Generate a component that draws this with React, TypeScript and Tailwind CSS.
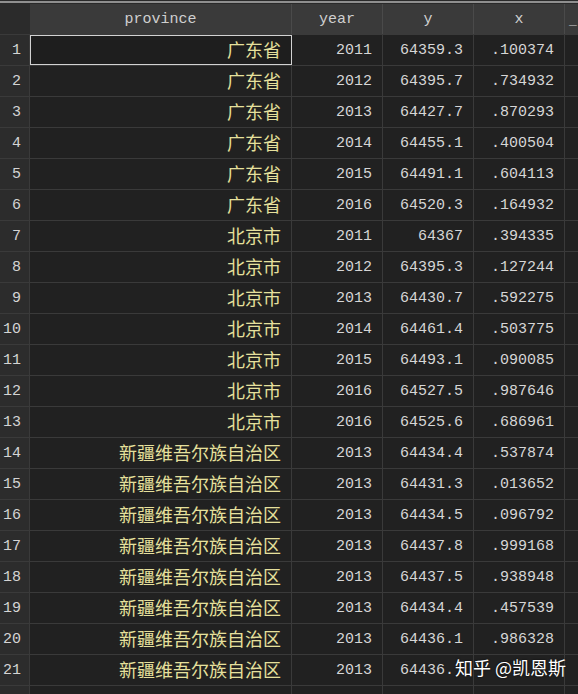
import React from 'react';

type Row = { p: string; year: string; y: string; x: string };

const GD = '广东省';
const BJ = '北京市';
const XJ = '新疆维吾尔族自治区';

const rows: Row[] = [
  { p: GD, year: '2011', y: '64359.3', x: '.100374' },
  { p: GD, year: '2012', y: '64395.7', x: '.734932' },
  { p: GD, year: '2013', y: '64427.7', x: '.870293' },
  { p: GD, year: '2014', y: '64455.1', x: '.400504' },
  { p: GD, year: '2015', y: '64491.1', x: '.604113' },
  { p: GD, year: '2016', y: '64520.3', x: '.164932' },
  { p: BJ, year: '2011', y: '64367', x: '.394335' },
  { p: BJ, year: '2012', y: '64395.3', x: '.127244' },
  { p: BJ, year: '2013', y: '64430.7', x: '.592275' },
  { p: BJ, year: '2014', y: '64461.4', x: '.503775' },
  { p: BJ, year: '2015', y: '64493.1', x: '.090085' },
  { p: BJ, year: '2016', y: '64527.5', x: '.987646' },
  { p: BJ, year: '2016', y: '64525.6', x: '.686961' },
  { p: XJ, year: '2013', y: '64434.4', x: '.537874' },
  { p: XJ, year: '2013', y: '64431.3', x: '.013652' },
  { p: XJ, year: '2013', y: '64434.5', x: '.096792' },
  { p: XJ, year: '2013', y: '64437.8', x: '.999168' },
  { p: XJ, year: '2013', y: '64437.5', x: '.938948' },
  { p: XJ, year: '2013', y: '64434.4', x: '.457539' },
  { p: XJ, year: '2013', y: '64436.1', x: '.986328' },
  { p: XJ, year: '2013', y: '64436.', x: '' },
];

const mono = "font-['Liberation_Mono','DejaVu_Sans_Mono',monospace]";
const cjk = "font-['Noto_Sans_CJK_SC',sans-serif]";

function NumCell({ value, last }: { value: string; last?: boolean }) {
  return (
    <div
      className={`w-[91px] shrink-0 border-r border-[#3a3a3a] flex items-center justify-end pt-[2px] text-[15px] text-[#d6d6d6] ${
        last ? 'pr-[19px]' : 'pr-[10px]'
      }`}
    >
      {value}
    </div>
  );
}

function HeadCell({ label, w }: { label: string; w: string }) {
  return (
    <div className={`${w} shrink-0 border-r border-[#4a4a4a] flex items-center justify-center pt-[3px] text-[15px] text-[#cfcfcf]`}>
      {label}
    </div>
  );
}

export default function App() {
  return (
    <div className={`relative w-[578px] h-[694px] overflow-hidden bg-[#212121] ${mono}`}>
      {/* top strip */}
      <div className="h-[4px] flex flex-col">
        <div className="h-px bg-[#2a2a2a]" />
        <div className="h-[2px] bg-[#8f8f8f]" />
        <div className="h-px bg-[#2a2a2a]" />
      </div>

      {/* header */}
      <div className="flex h-[31px] border-b border-[#3a3a3a] bg-[#3a3a3a]">
        <div className="w-[30px] shrink-0 bg-[#2b2b2b] border-r border-[#2b2b2b]" />
        <HeadCell label="province" w="w-[262px]" />
        <HeadCell label="year" w="w-[91px]" />
        <HeadCell label="y" w="w-[91px]" />
        <HeadCell label="x" w="w-[91px]" />
        <div className="flex-1 min-w-0 overflow-hidden flex items-center pl-[4px] pt-[3px] text-[13px] text-[#cfcfcf]">_</div>
      </div>

      {/* rows */}
      {rows.map((r, i) => (
        <div key={i} className="flex h-[31px] border-b border-[#3a3a3a]">
          <div className="w-[30px] shrink-0 bg-[#2c2c2c] border-r border-[#3a3a3a] flex items-center justify-end pr-[8px] pt-[2px] text-[15px] text-[#d4d4d4]">
            {i + 1}
          </div>
          <div
            className={`w-[262px] shrink-0 border-r border-[#3a3a3a] flex items-center justify-end pr-[10px] pb-[3px] ${
              i === 0 ? 'outline outline-1 -outline-offset-1 outline-[#d2d2d2] bg-[#1e1e1e]' : ''
            }`}
          >
            <span className={`${cjk} text-[18px] leading-none text-[#e6e09c]`}>{r.p}</span>
          </div>
          <NumCell value={r.year} />
          <NumCell value={r.y} last={i === rows.length - 1} />
          <NumCell value={r.x} />
          <div className="flex-1" />
        </div>
      ))}

      {/* partial row */}
      <div className="flex h-[20px]">
        <div className="w-[30px] shrink-0 bg-[#2c2c2c] border-r border-[#3a3a3a]" />
        <div className="w-[262px] shrink-0 border-r border-[#3a3a3a]" />
        <div className="w-[91px] shrink-0 border-r border-[#3a3a3a]" />
        <div className="w-[91px] shrink-0 border-r border-[#3a3a3a]" />
        <div className="w-[91px] shrink-0 border-r border-[#3a3a3a]" />
      </div>

      {/* watermark */}
      <div
        className={`absolute left-[455px] top-[658px] ${cjk} text-[18px] leading-none text-white [text-shadow:0_0_2px_rgba(0,0,0,0.9)]`}
      >
        知乎 @凯恩斯
      </div>
    </div>
  );
}
